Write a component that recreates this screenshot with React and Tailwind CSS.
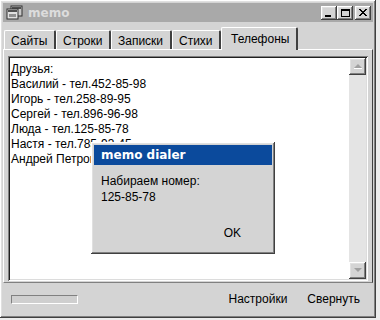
import React from "react";

const raised = "shadow-[inset_-1px_-1px_#404040,inset_1px_1px_#ffffff,inset_-2px_-2px_#808080,inset_2px_2px_#e0e0e0]";
const sunken = "shadow-[inset_1px_1px_#808080,inset_-1px_-1px_#ffffff,inset_2px_2px_#202020,inset_-2px_-2px_#dcdcdc]";

function TitleButton({ children }) {
  return (
    <div className={`w-[16px] h-[14px] bg-[#d4d4d4] ${raised} flex items-center justify-center`}>
      {children}
    </div>
  );
}

function Tab({ label, active, w }) {
  if (active) {
    return (
      <div className={`relative ${w} h-[23px] pl-[9px] pt-[3px] bg-[#d4d4d4] border-t border-l border-white border-r-2 border-r-[#404040] rounded-t-[2px] -mb-[1px] z-10 text-[12px] leading-[16px]`}>
        {label}
      </div>
    );
  }
  return (
    <div className={`${w} h-[19px] pl-[6px] pt-[2px] bg-[#d4d4d4] border-t border-l border-white border-r-2 border-r-[#404040] rounded-t-[2px] text-[12px] leading-[16px]`}>
      {label}
    </div>
  );
}

export default function App() {
  const lines = [
    "Друзья:",
    "Василий - тел.452-85-98",
    "Игорь - тел.258-89-95",
    "Сергей - тел.896-96-98",
    "Люда - тел.125-85-78",
    "Настя - тел.785-93-45",
    "Андрей Петров - тел.354-12-68",
  ];
  return (
    <div className="w-[380px] h-[320px] bg-[#ececec]" style={{ fontFamily: "Tahoma, 'Liberation Sans', sans-serif" }}>
      <div className={`relative w-[376px] h-[318px] bg-[#d4d4d4] ${raised} p-[3px] flex flex-col text-black`}>
        {/* title bar */}
        <div className="h-[19px] bg-[#a9a9a9] flex items-center pl-[3px] pr-[2px]">
          <svg width="17" height="15" viewBox="0 0 17 15">
            <rect x="5" y="1" width="11" height="10" fill="#c8c8c8" stroke="#303030" />
            <rect x="6" y="2" width="9" height="2" fill="#505050" />
            <rect x="1" y="4" width="11" height="10" fill="#e0e0e0" stroke="#303030" />
            <rect x="2" y="5" width="9" height="2" fill="#505050" />
            <rect x="3" y="9" width="7" height="3" fill="#909090" />
          </svg>
          <span className="ml-[5px] text-[12px] font-bold text-[#dcdcdc] leading-none" style={{ fontFamily: "'DejaVu Sans', sans-serif" }}>memo</span>
          <div className="ml-auto flex items-center">
            <TitleButton>
              <div className="w-[6px] h-[2px] bg-black mt-[6px] -ml-[2px]" />
            </TitleButton>
            <TitleButton>
              <div className="w-[9px] h-[8px] border border-black border-t-2" />
            </TitleButton>
            <div className="w-[2px]" />
            <TitleButton>
              <svg width="8" height="7" viewBox="0 0 8 7">
                <path d="M0 0L7 7M1 0L8 7M7 0L0 7M8 0L1 7" stroke="#000" strokeWidth="1" />
              </svg>
            </TitleButton>
          </div>
        </div>
        {/* tabs */}
        <div className="flex items-end pl-[1px] mt-[4px] h-[23px]">
          <Tab label="Сайты" w="w-[52px]" />
          <Tab label="Строки" w="w-[55px]" />
          <Tab label="Записки" w="w-[61px]" />
          <Tab label="Стихи" w="w-[49px]" />
          <Tab label="Телефоны" w="w-[77px]" active />
        </div>
        {/* panel */}
        <div className="h-[234px] border-t border-l border-white border-r border-b border-r-[#404040] border-b-[#808080] px-[4px] pt-[6px] pb-[1px] flex">
          <div className={`flex-1 bg-white ${sunken} p-[2px] flex`}>
            <div className="flex-1 pl-[1px] pt-[4px] text-[12px] leading-[15px]">
              {lines.map((l) => (
                <div key={l} className="whitespace-nowrap">{l}</div>
              ))}
            </div>
            <div className="w-[17px] bg-[#e4e4e4] flex flex-col justify-between">
              <div className={`h-[17px] bg-[#d4d4d4] ${raised} flex items-center justify-center`}>
                <svg width="8" height="5" viewBox="0 0 8 5"><path d="M4 0L8 4H0Z" fill="#a0a0a0" /><path d="M0 4.5H8" stroke="#fff" /></svg>
              </div>
              <div className={`h-[17px] bg-[#d4d4d4] ${raised} flex items-center justify-center`}>
                <svg width="8" height="5" viewBox="0 0 8 5"><path d="M0 0H8L4 4Z" fill="#a0a0a0" /></svg>
              </div>
            </div>
          </div>
        </div>
        {/* bottom */}
        <div className="flex-1 flex items-center pl-[8px] pr-[13px]">
          <div className="w-[67px] h-[9px] border border-t-[#808080] border-l-[#808080] border-r-white border-b-white bg-[#cfcfcf]" />
          <div className="ml-auto text-[12px] leading-none">Настройки</div>
          <div className="ml-[20px] text-[12px] leading-none">Свернуть</div>
        </div>

        {/* dialog */}
        <div className={`absolute left-[91px] top-[142px] w-[184px] h-[112px] bg-[#d4d4d4] ${raised} p-[3px] flex flex-col`}>
          <div className="h-[20px] bg-[#0b4a9c] flex items-center pl-[7px]">
            <span className="text-white font-bold text-[12px] leading-none" style={{ fontFamily: "'DejaVu Sans', sans-serif" }}>memo dialer</span>
          </div>
          <div className="pl-[7px] pt-[8px] text-[12px] leading-[16px]">
            <div>Набираем номер:</div>
            <div>125-85-78</div>
          </div>
          <div className="mt-auto mb-[12px] ml-auto mr-[31px] text-[12px] leading-none">OK</div>
        </div>
      </div>
    </div>
  );
}
